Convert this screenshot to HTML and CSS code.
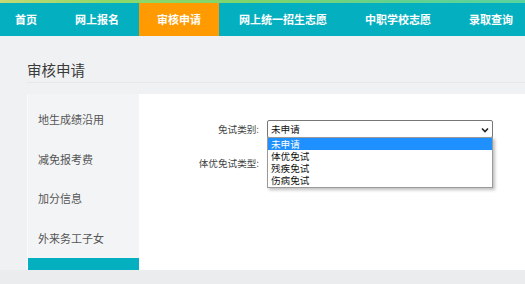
FILE: index.html
```html
<!DOCTYPE html>
<html>

<head>
    <meta charset="UTF-8">
    <title>审核申请</title>
    <link rel="stylesheet" href="styles.css">
</head>

<body>
    <div class="top-strip"></div>
    <ul class="nav">
        <li>首页</li>
        <li>网上报名</li>
        <li class="cur">审核申请</li>
        <li>网上统一招生志愿</li>
        <li>中职学校志愿</li>
        <li>录取查询</li>
    </ul>
    <div class="page">
        <h2 class="page-title">审核申请</h2>
        <div class="panel">
            <ul class="side">
                <li>地生成绩沿用</li>
                <li>减免报考费</li>
                <li>加分信息</li>
                <li>外来务工子女</li>
                <li class="cur"></li>
            </ul>
            <div class="main">
                <div class="row">
                    <label>免试类别:</label>
                    <div class="select">
                        <span>未申请</span>
                        <svg class="arrow" width="8" height="6" viewBox="0 0 8 6">
                            <path d="M1 1.5 L4 4.5 L7 1.5" fill="none" stroke="#222" stroke-width="1.6"/>
                        </svg>
                        <ul class="options">
                            <li class="on">未申请</li>
                            <li>体优免试</li>
                            <li>残疾免试</li>
                            <li>伤病免试</li>
                        </ul>
                    </div>
                </div>
                <div class="row">
                    <label>体优免试类型:</label>
                    <div class="select">
                        <span></span>
                    </div>
                </div>
            </div>
        </div>
    </div>
    <div class="foot"></div>
</body>

</html>
```

FILE: styles.css
```css
body,
ul,
li,
h2 {
    margin: 0;
    padding: 0;
}

ul {
    list-style: none;
}

body {
    background: #f0f1f3;
    font-family: "Noto Sans CJK SC", "Noto Sans", sans-serif;
    color: #333;
    overflow: hidden;
}

.top-strip {
    height: 3px;
    background: linear-gradient(to right, #c5d873, #8fd86a 20%, #7dd46c 50%, #63d28f 75%, #5ad3a0);
}

.nav {
    display: flex;
    height: 33px;
    padding-left: 0;
    margin-left: -4px;
    background: #04b0bf;
    white-space: nowrap;
}

.nav li {
    margin: 0 1px;
    padding: 0 18px;
    line-height: 33px;
    font-size: 11px;
    font-weight: bold;
    color: #fff;
}

.nav li.cur {
    background: #ff9a00;
}

.page {
    padding-left: 27px;
}

.page-title {
    padding: 24px 0 2px;
    line-height: 20px;
    font-size: 14.5px;
    font-weight: normal;
    color: #3a3a3a;
    border-bottom: 1px solid #e5e7ea;
    margin-bottom: 11px;
}

.panel {
    display: flex;
    height: 176px;
    overflow: hidden;
}

.side {
    width: 111px;
    padding-top: 6px;
    background: #f3f4f6;
    border-left: 1px solid #f8f9fa;
}

.side li {
    height: 39.5px;
    line-height: 39.5px;
    padding-left: 10px;
    font-size: 11px;
    color: #555;
}

.side li.cur {
    background: #04b0bf;
}

.main {
    flex: 1;
    background: #fff;
    padding-top: 26px;
}

.row {
    display: flex;
    align-items: center;
    height: 18px;
    margin-bottom: 16px;
}

.row label {
    width: 120px;
    margin-right: 8px;
    text-align: right;
    font-size: 9.6px;
    color: #444;
}

.select {
    position: relative;
    box-sizing: border-box;
    width: 226px;
    height: 18px;
    padding-left: 3px;
    border: 1px solid #767676;
    border-radius: 2px;
    background: #fff;
    font-size: 9.6px;
    line-height: 16px;
    color: #111;
}

.arrow {
    position: absolute;
    right: 3px;
    top: 6px;
}

.options {
    position: absolute;
    z-index: 2;
    left: -1px;
    top: 16px;
    box-sizing: border-box;
    width: 226px;
    height: 51px;
    border: 1px solid #9a9a9a;
    background: #fff;
    box-shadow: 2px 2px 3px rgba(0, 0, 0, .25);
}

.options li {
    height: 12px;
    line-height: 12px;
    padding-left: 3px;
    color: #111;
}

.options li.on {
    background: #1e90ff;
    color: #fff;
}

.foot {
    height: 14px;
    background: #ebecee;
}
```
